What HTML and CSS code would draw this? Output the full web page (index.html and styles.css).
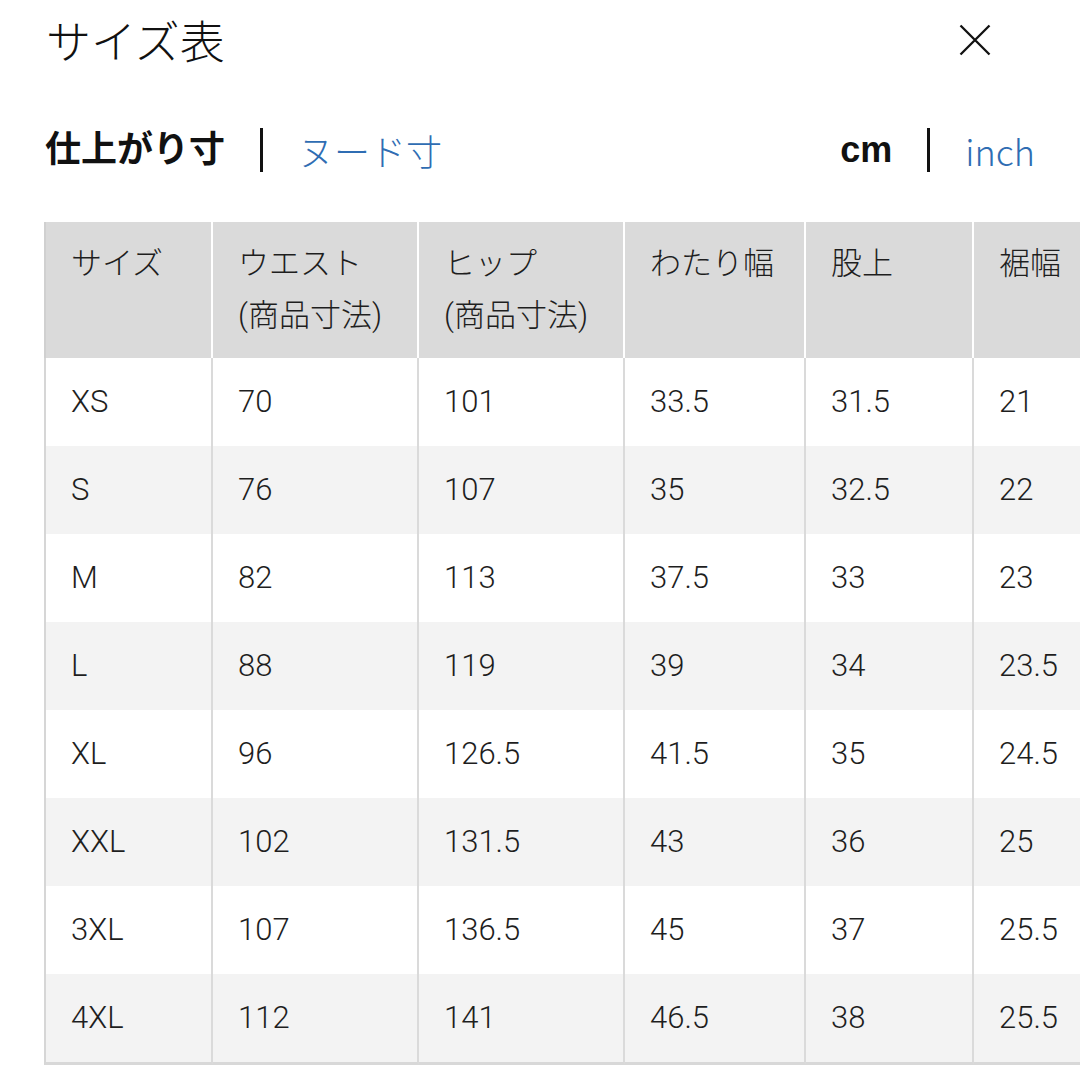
FILE: index.html
```html
<!DOCTYPE html>
<html lang="ja">
<head>
<meta charset="utf-8">
<title>サイズ表</title>
<link rel="stylesheet" href="styles.css">
</head>
<body>
<div class="sheet">
  <header class="top">
    <h1 class="title">サイズ表</h1>
    <button class="close" aria-label="閉じる">
      <svg viewBox="0 0 36 36" width="36" height="36"><path d="M3.5 3.5 L32.5 32.5 M32.5 3.5 L3.5 32.5" stroke="#111" stroke-width="2.3" fill="none"/></svg>
    </button>
  </header>
  <div class="toggles">
    <div class="seg">
      <span class="on">仕上がり寸</span>
      <span class="bar"></span>
      <span class="link">ヌード寸</span>
    </div>
    <div class="seg">
      <span class="on">cm</span>
      <span class="bar"></span>
      <span class="link">inch</span>
    </div>
  </div>
  <div class="table-wrap">
    <table class="size-table">
      <colgroup>
        <col class="c1"><col class="c2"><col class="c3"><col class="c4"><col class="c5"><col class="c6">
      </colgroup>
      <thead>
        <tr><th>サイズ</th><th>ウエスト<br>(商品寸法)</th><th>ヒップ<br>(商品寸法)</th><th>わたり幅</th><th>股上</th><th>裾幅</th></tr>
      </thead>
      <tbody>
        <tr><td>XS</td><td>70</td><td>101</td><td>33.5</td><td>31.5</td><td>21</td></tr>
        <tr><td>S</td><td>76</td><td>107</td><td>35</td><td>32.5</td><td>22</td></tr>
        <tr><td>M</td><td>82</td><td>113</td><td>37.5</td><td>33</td><td>23</td></tr>
        <tr><td>L</td><td>88</td><td>119</td><td>39</td><td>34</td><td>23.5</td></tr>
        <tr><td>XL</td><td>96</td><td>126.5</td><td>41.5</td><td>35</td><td>24.5</td></tr>
        <tr><td>XXL</td><td>102</td><td>131.5</td><td>43</td><td>36</td><td>25</td></tr>
        <tr><td>3XL</td><td>107</td><td>136.5</td><td>45</td><td>37</td><td>25.5</td></tr>
        <tr><td>4XL</td><td>112</td><td>141</td><td>46.5</td><td>38</td><td>25.5</td></tr>
      </tbody>
    </table>
  </div>
</div>
</body>
</html>
```
FILE: styles.css
```css
* { box-sizing: border-box; }
html, body {
  margin: 0;
  padding: 0;
  background: #fff;
}
body {
  font-family: "Liberation Sans", "Noto Sans CJK JP", sans-serif;
  color: #111;
  width: 1080px;
  height: 1080px;
  overflow: hidden;
}
.sheet {
  display: flex;
  flex-direction: column;
}
.top {
  display: flex;
  align-items: center;
  justify-content: space-between;
  padding: 12px 87px 0 46px;
  height: 68px;
}
.title {
  margin: 0;
  font-family: "Noto Sans CJK JP", sans-serif;
  font-weight: 300;
  font-size: 45px;
  line-height: 56px;
  color: #111;
}
.close {
  border: 0;
  background: none;
  padding: 0;
  width: 36px;
  height: 36px;
  display: flex;
  align-items: center;
  justify-content: center;
}
.toggles {
  display: flex;
  justify-content: space-between;
  align-items: center;
  margin-top: 60px;
  padding: 0 45px 0 45px;
  height: 44px;
}
.seg {
  display: flex;
  align-items: center;
  gap: 35px;
  font-size: 36px;
  line-height: 44px;
}
.seg .on {
  font-weight: 700;
  color: #111;
}
.seg .link {
  color: #2f6db3;
  font-weight: 300;
}
.seg .link:lang(ja) {
  font-family: "Noto Sans CJK JP", sans-serif;
}
.seg .bar {
  width: 3px;
  height: 44px;
  background: #111;
}
.table-wrap {
  margin-top: 50px;
  margin-left: 44px;
  overflow: hidden;
}
.size-table {
  table-layout: fixed;
  width: 1100px;
  border-collapse: separate;
  border-spacing: 0;
  font-family: "Roboto", "Noto Sans CJK JP", sans-serif;
  font-weight: 300;
  font-size: 31px;
  line-height: 52px;
  color: #1e1e1e;
}
.c1 { width: 169px; }
.c2 { width: 206px; }
.c3 { width: 206px; }
.c4 { width: 181px; }
.c5 { width: 168px; }
.c6 { width: 170px; }
.size-table th,
.size-table td {
  text-align: left;
  vertical-align: top;
  padding: 18px 10px 18px 25px;
  white-space: nowrap;
}
.size-table th {
  background: #dadada;
  font-weight: 300;
  padding-top: 16px;
  padding-bottom: 16px;
  border-right: 2px solid #fff;
}
.size-table th:first-child {
  border-left: 2px solid #d0d0d0;
}
.size-table td {
  border-right: 2px solid #dadada;
}
.size-table td:first-child {
  border-left: 2px solid #d6d6d6;
}
.size-table tbody tr:nth-child(even) td {
  background: #f3f3f3;
}
.size-table tbody tr:last-child td {
  border-bottom: 3px solid #d8d8d8;
}
```
